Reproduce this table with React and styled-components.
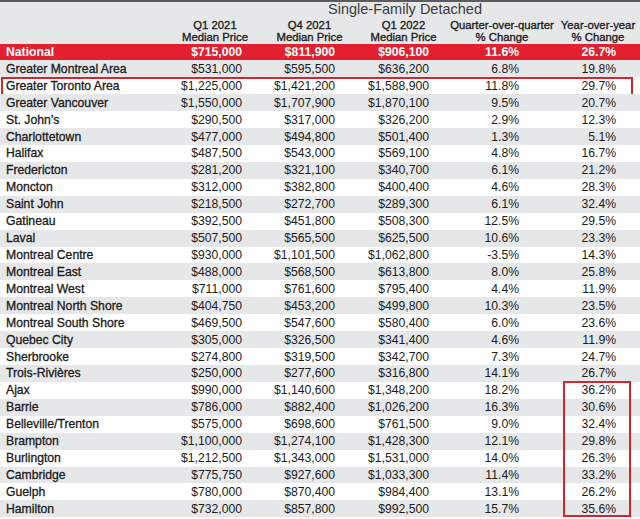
import React from 'react'
import styled, { createGlobalStyle, css } from 'styled-components'

const ROW_H = 16.93

const GlobalStyle = createGlobalStyle`
  html, body {
    margin: 0;
    padding: 0;
    background: #fff;
  }
  body {
    font-family: "Liberation Sans", Arial, Helvetica, sans-serif;
    color: #1b1b1b;
  }
`

const COLS = '170px 90px 99px 89px 108px 84px'
const PADS = [18, 24, 19, 37, 24]

const Sheet = styled.div`
  width: 640px;
  position: relative;
`

const Head = styled.div`
  background: #e6e7e9;
  border-top: 2px solid #5a5b5d;
  height: 41.5px;
  display: flex;
  flex-direction: column;
`

const Title = styled.div`
  padding-left: 170px;
  text-align: center;
  font-size: 14.5px;
  line-height: 14px;
  color: #3b3b3d;
`

const HeadRow = styled.div`
  display: grid;
  grid-template-columns: ${COLS};
  margin-top: 3px;
`

const HeadCell = styled.div`
  text-align: center;
  font-size: 11.3px;
  line-height: 12.3px;
  font-weight: 400;
  -webkit-text-stroke: 0.35px #1e1e1e;
  color: #1e1e1e;
  white-space: nowrap;
`

const Body = styled.div`
  position: relative;
`

const Row = styled.div`
  display: grid;
  grid-template-columns: ${COLS};
  align-items: center;
  height: ${ROW_H}px;
  font-size: 12.2px;
  background: ${p => (p.$tone === 'red' ? '#e3202f' : p.$tone === 'gray' ? '#e6e7e9' : '#fff')};
  color: ${p => (p.$tone === 'red' ? '#fff' : '#1b1b1b')};
  font-weight: ${p => (p.$tone === 'red' ? 700 : 400)};
  position: relative;
  ${p =>
    p.$boxed &&
    css`
      &::after {
        content: '';
        position: absolute;
        top: 0;
        bottom: -2px;
        left: 1px;
        right: 7px;
        border: 2px solid #d8242e;
        pointer-events: none;
      }
    `}
`

const Name = styled.div`
  padding-left: 6px;
  white-space: nowrap;
  -webkit-text-stroke: ${p => (p.$bold ? '0' : '0.3px')};
`

const Num = styled.div`
  text-align: right;
  padding-right: ${p => p.$pad}px;
  white-space: nowrap;
`

const ColumnBox = styled.div`
  position: absolute;
  left: 563px;
  width: 68px;
  top: ${p => p.$from * ROW_H - 1}px;
  height: ${p => p.$count * ROW_H}px;
  border: 2px solid #d8242e;
  box-sizing: border-box;
  pointer-events: none;
`

const rows = [
  ['National', '$715,000', '$811,900', '$906,100', '11.6%', '26.7%'],
  ['Greater Montreal Area', '$531,000', '$595,500', '$636,200', '6.8%', '19.8%'],
  ['Greater Toronto Area', '$1,225,000', '$1,421,200', '$1,588,900', '11.8%', '29.7%'],
  ['Greater Vancouver', '$1,550,000', '$1,707,900', '$1,870,100', '9.5%', '20.7%'],
  ['St. John\u2019s', '$290,500', '$317,000', '$326,200', '2.9%', '12.3%'],
  ['Charlottetown', '$477,000', '$494,800', '$501,400', '1.3%', '5.1%'],
  ['Halifax', '$487,500', '$543,000', '$569,100', '4.8%', '16.7%'],
  ['Fredericton', '$281,200', '$321,100', '$340,700', '6.1%', '21.2%'],
  ['Moncton', '$312,000', '$382,800', '$400,400', '4.6%', '28.3%'],
  ['Saint John', '$218,500', '$272,700', '$289,300', '6.1%', '32.4%'],
  ['Gatineau', '$392,500', '$451,800', '$508,300', '12.5%', '29.5%'],
  ['Laval', '$507,500', '$565,500', '$625,500', '10.6%', '23.3%'],
  ['Montreal Centre', '$930,000', '$1,101,500', '$1,062,800', '-3.5%', '14.3%'],
  ['Montreal East', '$488,000', '$568,500', '$613,800', '8.0%', '25.8%'],
  ['Montreal West', '$711,000', '$761,600', '$795,400', '4.4%', '11.9%'],
  ['Montreal North Shore', '$404,750', '$453,200', '$499,800', '10.3%', '23.5%'],
  ['Montreal South Shore', '$469,500', '$547,600', '$580,400', '6.0%', '23.6%'],
  ['Quebec City', '$305,000', '$326,500', '$341,400', '4.6%', '11.9%'],
  ['Sherbrooke', '$274,800', '$319,500', '$342,700', '7.3%', '24.7%'],
  ['Trois-Rivi\u00e8res', '$250,000', '$277,600', '$316,800', '14.1%', '26.7%'],
  ['Ajax', '$990,000', '$1,140,600', '$1,348,200', '18.2%', '36.2%'],
  ['Barrie', '$786,000', '$882,400', '$1,026,200', '16.3%', '30.6%'],
  ['Belleville/Trenton', '$575,000', '$698,600', '$761,500', '9.0%', '32.4%'],
  ['Brampton', '$1,100,000', '$1,274,100', '$1,428,300', '12.1%', '29.8%'],
  ['Burlington', '$1,212,500', '$1,343,000', '$1,531,000', '14.0%', '26.3%'],
  ['Cambridge', '$775,750', '$927,600', '$1,033,300', '11.4%', '33.2%'],
  ['Guelph', '$780,000', '$870,400', '$984,400', '13.1%', '26.2%'],
  ['Hamilton', '$732,000', '$857,800', '$992,500', '15.7%', '35.6%'],
]

const headers = [
  ['Q1 2021', 'Median Price'],
  ['Q4 2021', 'Median Price'],
  ['Q1 2022', 'Median Price'],
  ['Quarter-over-quarter', '% Change'],
  ['Year-over-year', '% Change'],
]

const App = () => {
  return (
    <Sheet>
      <GlobalStyle />
      <Head>
        <Title>Single-Family Detached</Title>
        <HeadRow>
          <div />
          {headers.map(([a, b]) => (
            <HeadCell key={a}>
              {a}
              <br />
              {b}
            </HeadCell>
          ))}
        </HeadRow>
      </Head>
      <Body>
        {rows.map(([name, ...vals], i) => {
          const tone = i === 0 ? 'red' : i % 2 === 1 ? 'gray' : 'white'
          return (
            <Row key={name} $tone={tone} $boxed={name === 'Greater Toronto Area'}>
              <Name $bold={i === 0}>{name}</Name>
              {vals.map((v, j) => (
                <Num key={j} $pad={PADS[j]}>
                  {v}
                </Num>
              ))}
            </Row>
          )
        })}
        <ColumnBox $from={20} $count={8} />
      </Body>
    </Sheet>
  )
}

export default App
